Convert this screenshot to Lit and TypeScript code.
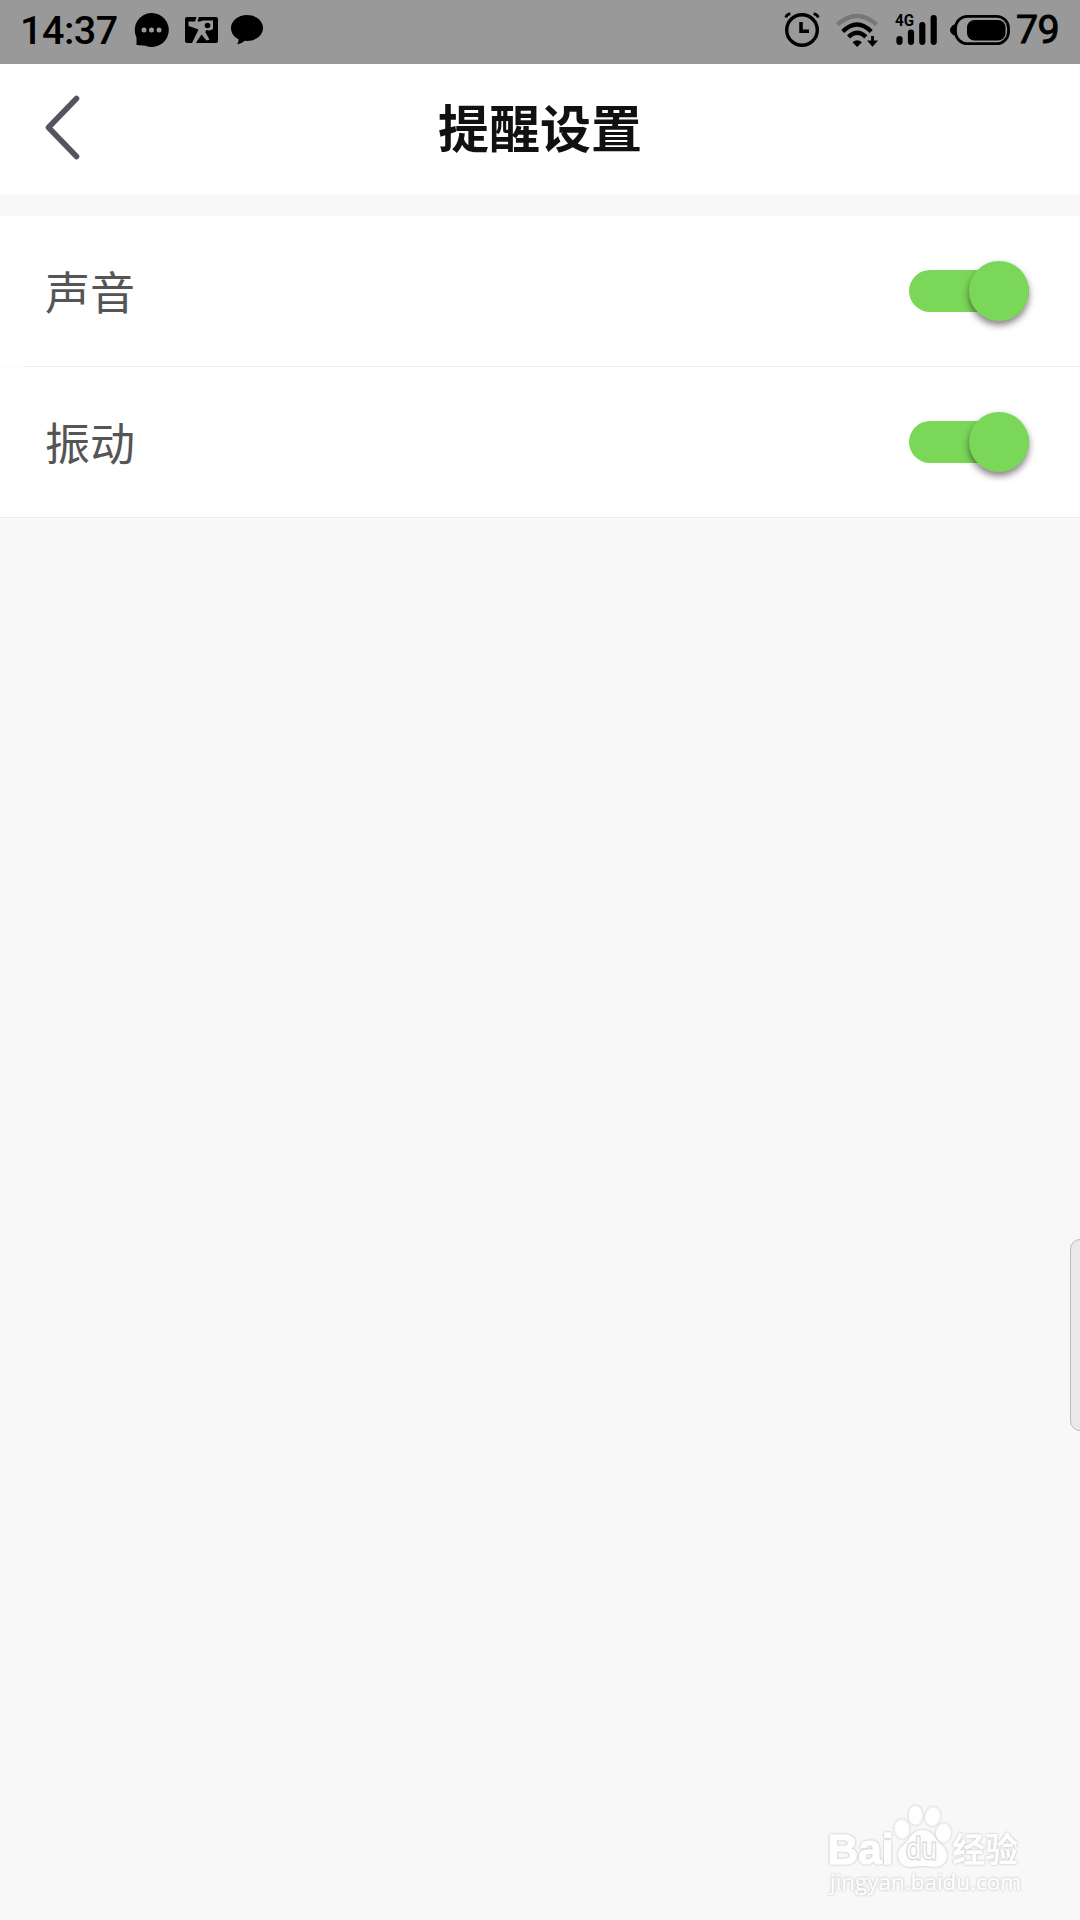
import { LitElement, html, css, svg } from "lit";
import { customElement, property } from "lit/decorators.js";

@customElement("status-bar")
class StatusBar extends LitElement {
  static styles = css`
    :host {
      display: flex;
      justify-content: space-between;
      height: 64px;
      background: #999;
      color: #000;
      font: 500 39.5px/61px Roboto, sans-serif;
    }
    .side { display: flex; }
    .left { padding-left: 20px; }
    .right { padding-right: 20px; }
    .time { width: 110px; white-space: nowrap; letter-spacing: -0.5px; }
    .percent { width: 44px; font-weight: 400; -webkit-text-stroke: 0.9px #000; white-space: nowrap; letter-spacing: -0.8px; line-height: 59px; }
    svg { display: block; flex: none; }
    .net { font: 700 16.5px Roboto, sans-serif; }
  `;
  render() {
    return html`
      <div class="side left">
        <span class="time">14:37</span>
        <svg width="140" height="64" viewBox="130 0 140 64">
          <path d="M151.500 13a17 17 0 1 1-6 32.800L136.500 45v-7.500A17 17 0 0 1 151.500 13z"/>
          <g fill="#999"><circle cx="144" cy="30" r="2.500"/><circle cx="151.500" cy="30" r="2.500"/><circle cx="159" cy="30" r="2.500"/></g>
          <rect x="185" y="17" width="33" height="26" rx="2"/>
          <path d="M188.500 21.500H195L196.500 17h2.300l-1.300 4.500H200L203 20.500H213V29L209.500 30.500 206 30 205.500 32.500 209.500 39.500 206.500 40.500 201.500 34.500 195.500 43.500H191.800L198.500 29.500 193 27.500 188.500 26z" fill="#999"/>
          <circle cx="207.500" cy="25.500" r="2.800"/>
          <path d="M247 15c8.800 0 16 5.700 16 13s-7.200 13-16 13l-2.500-.2c-1.500 1.800-4 3.200-7.500 3.500 1.200-1.600 1.700-3.400 1.500-5-4.700-2.300-7.500-6.500-7.500-11.300C231 20.700 238.200 15 247 15z"/>
        </svg>
      </div>
      <div class="side right">
        <svg width="236" height="64" viewBox="780 0 236 64">
          <circle cx="802" cy="30" r="15.300" fill="none" stroke="#000" stroke-width="3.400"/>
          <path d="M801 22v9.200h8" fill="none" stroke="#000" stroke-width="3.500"/>
          <path d="M785.800 17.500q.8-3 4.500-3.800M818.200 17.500q-.8-3-4.500-3.800" fill="none" stroke="#000" stroke-width="2.800"/>
          <g fill="none" stroke="#000" stroke-width="4.400">
            <path d="M837.500 24.500q19.500-17 39 0" stroke="#777" stroke-width="4.500"/>
            <path d="M842.800 31.500q14.200-14 28.400 0"/>
            <path d="M848.500 36.800q8.700-8 17.400 0"/>
            <path d="M872.500 36v8" stroke-width="2.800"/>
          </g>
          <path d="M852.500 42.200q4.700-4 9.400 0L857.200 47z"/>
          <path d="M867 40.500h11l-5.500 6.200z"/>
          <text class="net" x="895" y="26" textLength="19" lengthAdjust="spacingAndGlyphs">4G</text>
          <g stroke="#000" stroke-width="6.200" stroke-linecap="round">
            <path d="M899.500 39v2.800M911 32.500v9.300M922.300 25v16.800M933.700 18v23.800"/>
          </g>
          <rect x="955.500" y="16.300" width="53" height="27.400" rx="12" fill="none" stroke="#000" stroke-width="2.800"/>
          <rect x="967" y="20" width="38.500" height="20.500" rx="7.500"/>
          <path d="M956 24.500h-2q-4 2.500-4 5.500t4 5.500h2z"/>
        </svg>
        <span class="percent">79</span>
      </div>
    `;
  }
}

@customElement("nav-header")
class NavHeader extends LitElement {
  @property() title = "";
  static styles = css`
    :host {
      display: grid;
      grid-template-columns: 120px 1fr 120px;
      align-items: center;
      height: 131px;
      background: #fff;
    }
    svg { display: block; margin-left: 42px; margin-bottom: 5px; }
    .title {
      margin: 0 0 7px;
      text-align: center;
      color: #111;
      font: 700 51px/70px "Noto Sans CJK SC", sans-serif;
    }
  `;
  render() {
    return html`
      <svg width="42" height="72" viewBox="42 91 42 72">
        <path d="M76.500 98.500L48.500 127.500L76.500 156.500" fill="none" stroke="#55535f" stroke-width="5.600" stroke-linecap="round" stroke-linejoin="round"/>
      </svg>
      <h1 class="title">${this.title}</h1>
    `;
  }
}

@customElement("setting-row")
class SettingRow extends LitElement {
  @property() label = "";
  static styles = css`
    :host {
      box-sizing: border-box;
      display: flex;
      align-items: center;
      justify-content: space-between;
      height: 151px;
      padding: 0 51px 0 45px;
      background: #fff;
      border-bottom: 1px solid #ebebeb;
    }
    :host([inset]) {
      border-image: linear-gradient(to right, #f8f8f8 24px, #ebebeb 31px) 1;
    }
    .label { margin-bottom: 1px; color: #555; font: 400 45px/66px "Noto Sans CJK SC", sans-serif; }
    .track {
      display: flex;
      align-items: center;
      justify-content: flex-end;
      width: 120px;
      height: 42px;
      border-radius: 21px;
      background: #7ad758;
    }
    .thumb {
      width: 60px;
      height: 60px;
      border-radius: 50%;
      background: #7ad758;
      box-shadow: 0 4px 7px rgba(20, 0, 20, 0.5);
    }
  `;
  render() {
    return html`
      <span class="label">${this.label}</span>
      <div class="track"><div class="thumb"></div></div>
    `;
  }
}

@customElement("brand-mark")
class BrandMark extends LitElement {
  static styles = css`
    :host { display: block; }
    svg { display: block; }
    .shape { fill: #fefefe; filter: drop-shadow(0 0 1px #b4b4b4); }
    .latin { font: 700 43px "Liberation Sans", sans-serif; stroke: #fefefe; stroke-width: 1.4px; }
    .du { font: 400 30px "Open Sans", sans-serif; fill: #fefefe; stroke: #dadada; stroke-width: 3px; paint-order: stroke; }
    .cjk { font: 700 34px "Noto Sans CJK SC", sans-serif; }
    .url { font: 400 22px "Open Sans", sans-serif; stroke: #fefefe; stroke-width: 0.4px; }
  `;
  render() {
    const toes = [
      [902, 1828.5, 7.7, 9.7, -8],
      [915.5, 1814.7, 7.2, 9.9, 0],
      [932.7, 1816, 7.7, 9.7, 12],
      [943.5, 1832.5, 7.7, 9.7, 5],
    ];
    return html`
      <svg width="210" height="120" viewBox="820 1789.500 210 120">
        <text class="shape latin" x="827.500" y="1863.500" textLength="66" lengthAdjust="spacingAndGlyphs">Bai</text>
        ${toes.map(([x, y, rx, ry, a]) => svg`<ellipse class="shape" cx=${x} cy=${y} rx=${rx} ry=${ry} transform="rotate(${a} ${x} ${y})"/>`)}
        <path class="shape" d="M922.500 1829.500c8 0 11 5 14 9.500 4 5.500 10.500 8 10.500 16 0 8-6 11.500-13 11.500-4 0-7-1-11.500-1s-7.500 1-11.500 1c-7 0-13-3.500-13-11.500 0-8 6.500-10.500 10.500-16 3-4.500 6-9.500 14-9.500z"/>
        <text class="du" x="906" y="1858.500" textLength="31" lengthAdjust="spacingAndGlyphs">du</text>
        <text class="shape cjk" x="952" y="1861" textLength="66" lengthAdjust="spacingAndGlyphs">经验</text>
        <text class="shape url" x="830" y="1889.500" textLength="191" lengthAdjust="spacingAndGlyphs">jingyan.baidu.com</text>
      </svg>
    `;
  }
}

@customElement("app-root")
class AppRoot extends LitElement {
  static styles = css`
    :host {
      position: relative;
      display: flex;
      flex-direction: column;
      width: 1080px;
      height: 1920px;
      overflow: hidden;
      background: #f8f8f8;
    }
    .list { margin-top: 21px; }
    .handle {
      position: absolute;
      box-sizing: border-box;
      right: -10px;
      top: 1239px;
      width: 20px;
      height: 192px;
      border: 1px solid #bdbdbd;
      border-radius: 11px;
      background: #e9e9e9;
    }
    .brand { position: absolute; right: 50px; bottom: 10px; }
  `;
  render() {
    return html`
      <status-bar></status-bar>
      <nav-header title="提醒设置"></nav-header>
      <main class="list">
        <setting-row label="声音" inset></setting-row>
        <setting-row label="振动"></setting-row>
      </main>
      <div class="handle"></div>
      <brand-mark class="brand"></brand-mark>
    `;
  }
}
